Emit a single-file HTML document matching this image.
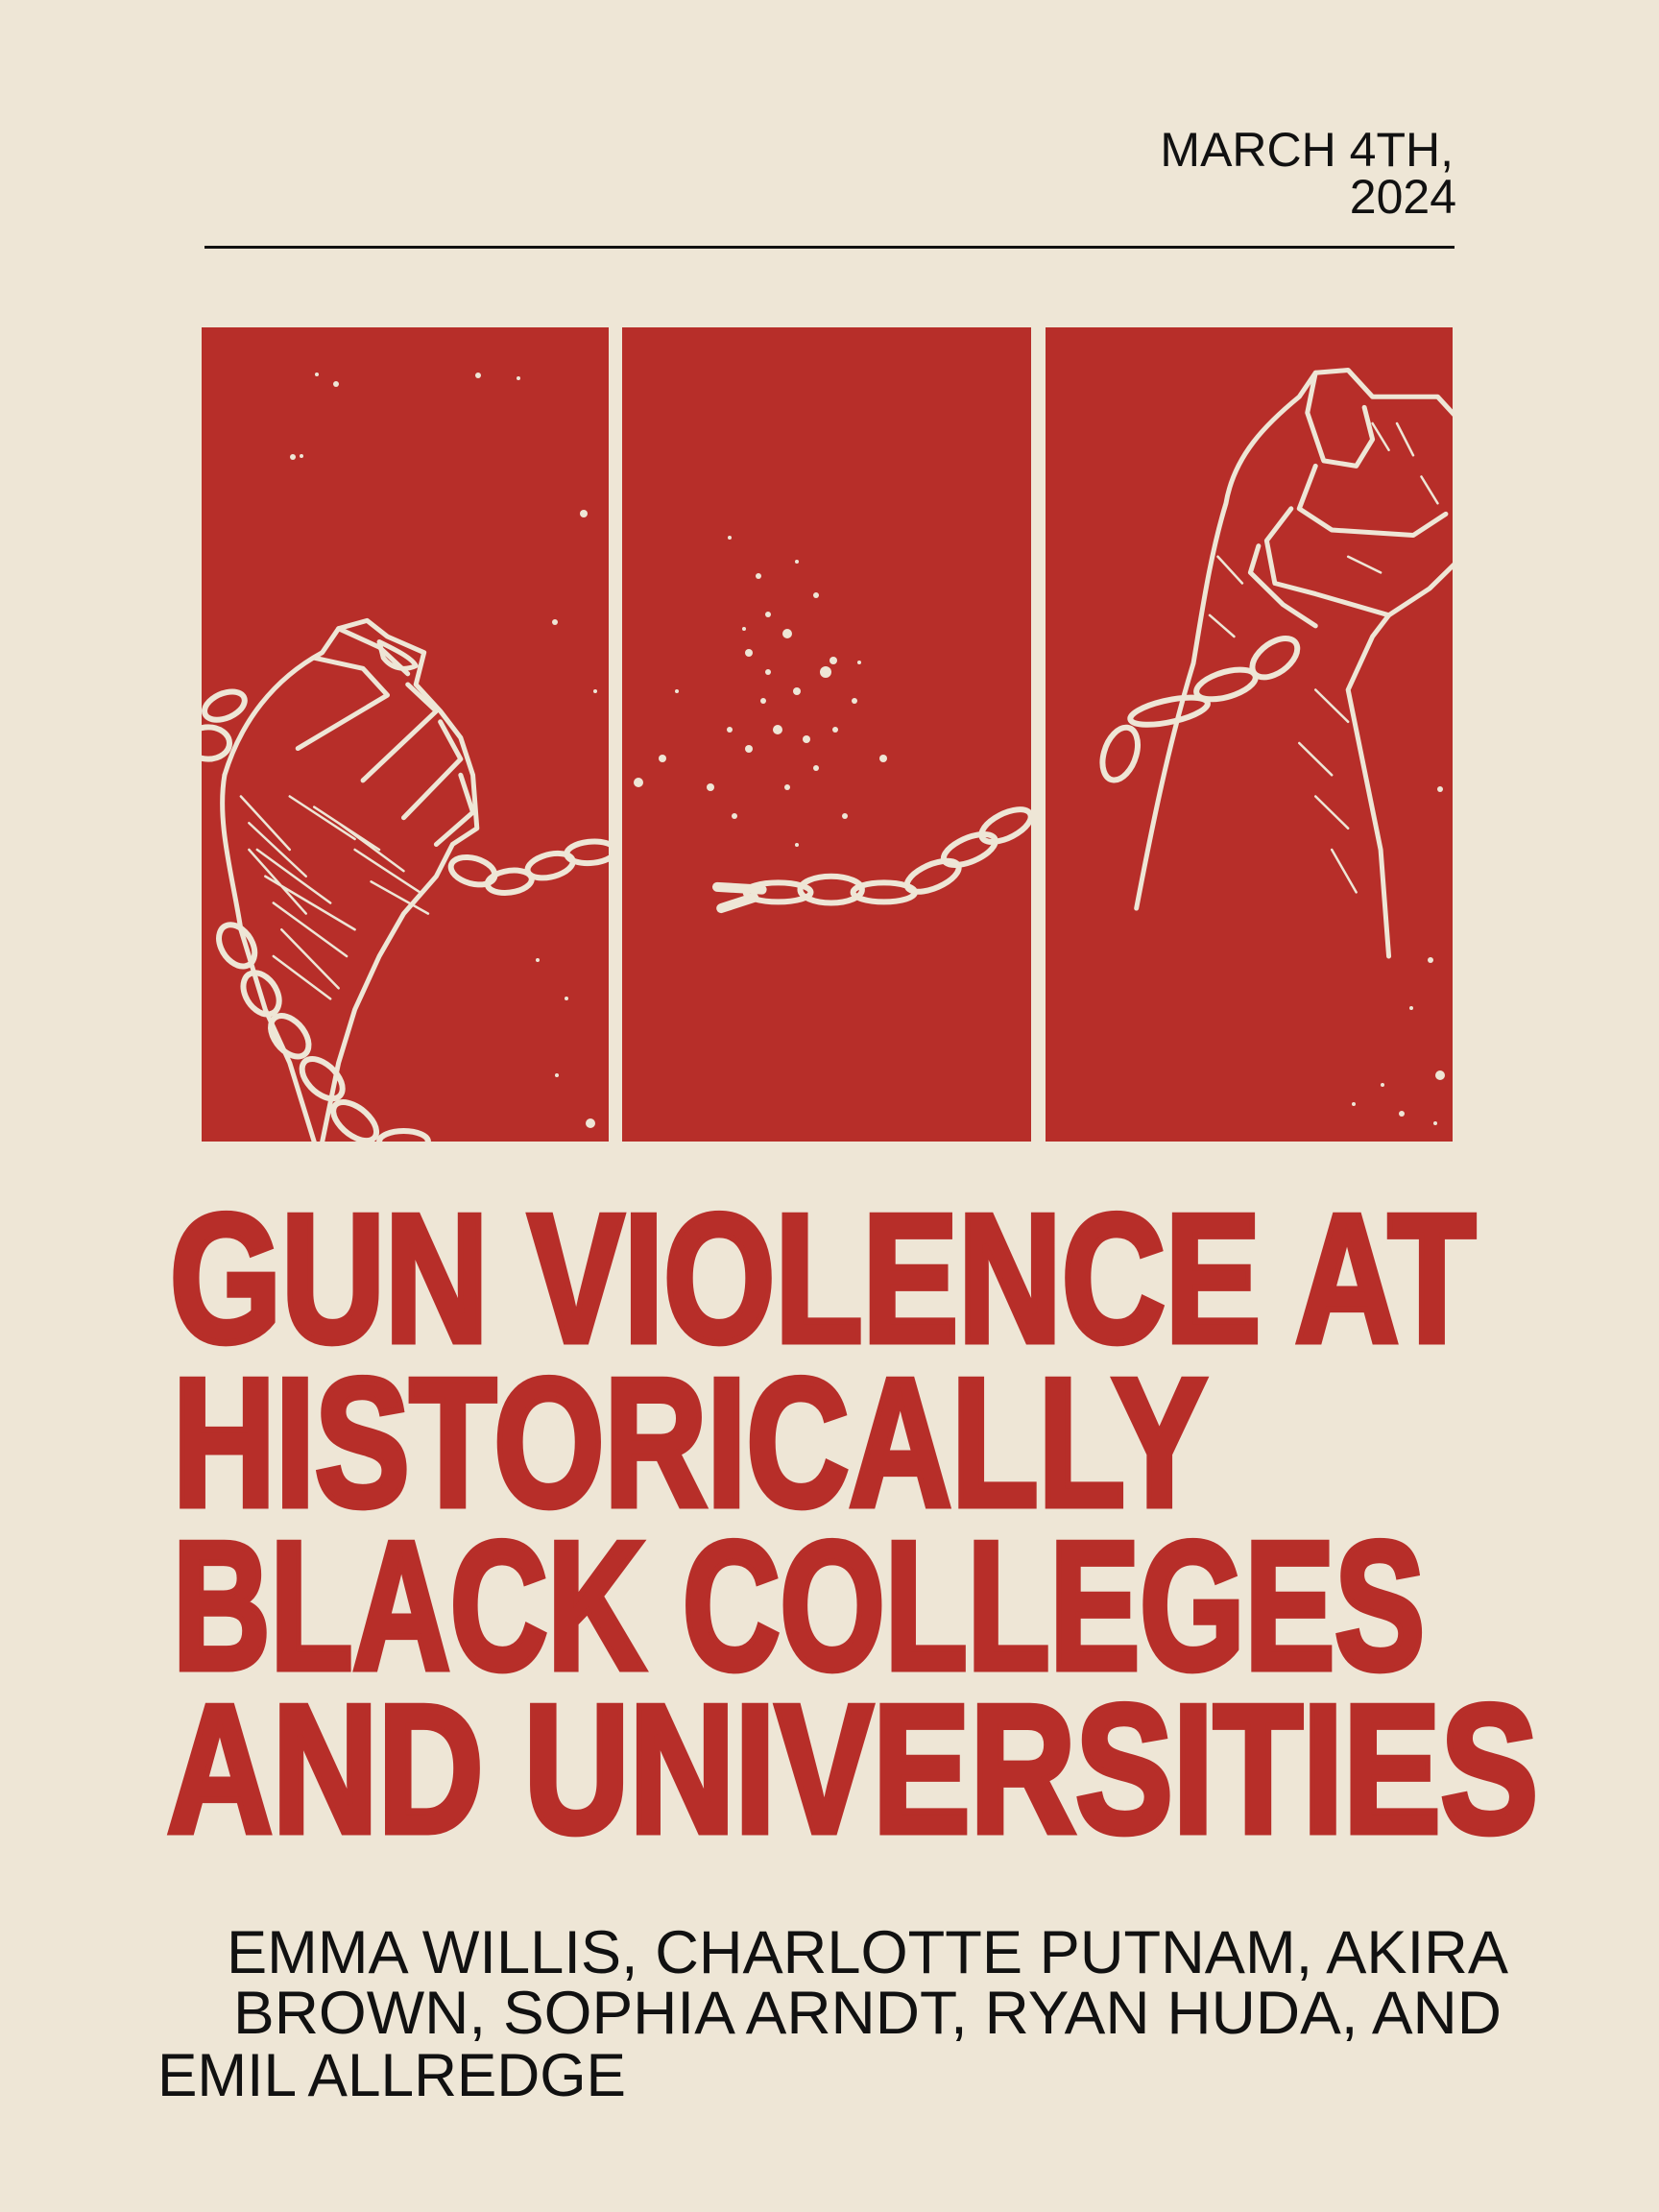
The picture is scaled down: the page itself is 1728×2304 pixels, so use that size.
<!DOCTYPE html>
<html><head><meta charset="utf-8"><style>
html,body{margin:0;padding:0;background:#eee6d6;}
svg{display:block}
</style></head><body>
<svg width="1728" height="2304" viewBox="0 0 1728 2304" xmlns="http://www.w3.org/2000/svg">
<rect width="1728" height="2304" fill="#eee6d6"/>
<g font-family="Liberation Sans, sans-serif" fill="#111">
<text x="1514" y="173" font-size="50" text-anchor="end">MARCH 4TH,</text>
<text x="1517" y="222" font-size="50" text-anchor="end">2024</text>
</g>
<rect x="213" y="256" width="1302" height="3" fill="#111"/>
<rect x="210" y="341" width="424" height="848" fill="#b72e29"/>
<rect x="648" y="341" width="426" height="848" fill="#b72e29"/>
<rect x="1089" y="341" width="424" height="848" fill="#b72e29"/>
<defs><clipPath id="c"><rect x="210" y="341" width="424" height="848"/><rect x="648" y="341" width="426" height="848"/><rect x="1089" y="341" width="424" height="848"/></clipPath></defs>
<g clip-path="url(#c)">
<g transform="translate(200,330) scale(0.848,0.555)" fill="none" stroke="#eee6d6" stroke-width="5" vector-effect="non-scaling-stroke" stroke-linecap="round" stroke-linejoin="round">
<path vector-effect="non-scaling-stroke" d="M40,860 C60,760 100,680 160,630 L180,585 L215,570 L240,600 L285,630 L275,690 L305,740 L330,790 L345,860 L350,960 L320,990 L300,1050 L260,1120 L230,1200 L200,1300 L180,1400 L160,1548"/>
<path vector-effect="non-scaling-stroke" d="M40,860 C30,950 50,1050 60,1150 L90,1300 L120,1400 L150,1548"/>
<path vector-effect="non-scaling-stroke" d="M180,585 L230,620 L265,670 M150,640 L210,660 L240,710 L130,810 M265,690 L300,740 L210,870 M305,760 L330,830 L260,940 M330,860 L345,930 L300,990"/>
<path vector-effect="non-scaling-stroke" d="M230,610 C250,625 270,640 275,655 C260,665 245,660 235,640 Z"/>
<path vector-effect="non-scaling-stroke" stroke-width="2.5" d="M60,900 L120,1000 M70,950 L140,1050 M80,1000 L170,1100 M90,1050 L200,1150 M100,1100 L190,1200 M110,1150 L180,1260 M150,920 L230,1000 M180,950 L260,1040 M120,900 L200,980 M70,1000 L140,1120 M100,1200 L170,1280 M200,1000 L280,1080 M220,1060 L290,1120"/>
<g stroke-width="6">
<ellipse vector-effect="non-scaling-stroke" cx="345" cy="1040" rx="30" ry="22" transform="rotate(40 345 1040)"/>
<ellipse vector-effect="non-scaling-stroke" cx="390" cy="1060" rx="28" ry="20" transform="rotate(-20 390 1060)"/>
<ellipse vector-effect="non-scaling-stroke" cx="440" cy="1030" rx="30" ry="20" transform="rotate(-30 440 1030)"/>
<ellipse vector-effect="non-scaling-stroke" cx="490" cy="1005" rx="30" ry="20" transform="rotate(-10 490 1005)"/>
<ellipse vector-effect="non-scaling-stroke" cx="40" cy="730" rx="30" ry="20" transform="rotate(-50 40 730)"/>
<ellipse vector-effect="non-scaling-stroke" cx="20" cy="800" rx="26" ry="30"/>
<ellipse vector-effect="non-scaling-stroke" cx="55" cy="1180" rx="20" ry="40" transform="rotate(-15 55 1180)"/>
<ellipse vector-effect="non-scaling-stroke" cx="85" cy="1270" rx="20" ry="40" transform="rotate(-15 85 1270)"/>
<ellipse vector-effect="non-scaling-stroke" cx="120" cy="1350" rx="20" ry="40" transform="rotate(-20 120 1350)"/>
<ellipse vector-effect="non-scaling-stroke" cx="160" cy="1430" rx="20" ry="40" transform="rotate(-25 160 1430)"/>
<ellipse vector-effect="non-scaling-stroke" cx="200" cy="1510" rx="20" ry="40" transform="rotate(-30 200 1510)"/>
<ellipse vector-effect="non-scaling-stroke" cx="260" cy="1548" rx="30" ry="20"/>
<path vector-effect="non-scaling-stroke" stroke-width="10" d="M645,1070 L700,1075 M650,1110 L690,1090"/>
<ellipse vector-effect="non-scaling-stroke" cx="720" cy="1080" rx="40" ry="18"/>
<ellipse vector-effect="non-scaling-stroke" cx="785" cy="1075" rx="38" ry="25"/>
<ellipse vector-effect="non-scaling-stroke" cx="850" cy="1080" rx="38" ry="18"/>
<ellipse vector-effect="non-scaling-stroke" cx="910" cy="1050" rx="38" ry="20" transform="rotate(-40 910 1050)"/>
<ellipse vector-effect="non-scaling-stroke" cx="955" cy="1000" rx="38" ry="20" transform="rotate(-40 955 1000)"/>
<ellipse vector-effect="non-scaling-stroke" cx="1000" cy="955" rx="38" ry="20" transform="rotate(-45 1000 955)"/>
<ellipse vector-effect="non-scaling-stroke" cx="1140" cy="820" rx="20" ry="50" transform="rotate(10 1140 820)"/>
<ellipse vector-effect="non-scaling-stroke" cx="1200" cy="740" rx="50" ry="20" transform="rotate(-20 1200 740)"/>
<ellipse vector-effect="non-scaling-stroke" cx="1270" cy="690" rx="40" ry="22" transform="rotate(-30 1270 690)"/>
<ellipse vector-effect="non-scaling-stroke" cx="1330" cy="640" rx="40" ry="22" transform="rotate(-60 1330 640)"/>
</g>
<path vector-effect="non-scaling-stroke" d="M1160,1110 C1180,950 1200,800 1230,650 C1240,560 1250,450 1270,350 C1280,260 1320,200 1360,150 L1380,105 L1420,100 L1450,150 L1530,150 L1560,200 L1560,450 L1520,510 L1470,560 L1450,600 L1420,700 L1440,850 L1460,1000 L1470,1200"/>
<path vector-effect="non-scaling-stroke" d="M1380,105 L1370,180 L1390,270 L1430,280 L1450,230 L1440,170 M1380,280 L1360,360 L1400,400 L1500,410 L1540,370 M1350,360 L1320,420 L1330,500 L1380,520 L1470,560 M1310,430 L1300,480 L1340,540 L1380,580"/>
<path vector-effect="non-scaling-stroke" stroke-width="2.5" d="M1450,200 L1470,250 M1480,200 L1500,260 M1510,300 L1530,350 M1420,450 L1460,480 M1380,700 L1420,760 M1360,800 L1400,860 M1380,900 L1420,960 M1400,1000 L1430,1080 M1260,450 L1290,500 M1250,560 L1280,600"/>
</g>
<g fill="#eee6d6">
<circle cx="330" cy="390" r="2"/><circle cx="350" cy="400" r="3"/><circle cx="498" cy="391" r="3"/><circle cx="540" cy="394" r="2"/><circle cx="305" cy="476" r="3"/><circle cx="314" cy="475" r="2"/><circle cx="608" cy="535" r="4"/><circle cx="578" cy="648" r="3"/><circle cx="620" cy="720" r="2"/><circle cx="560" cy="1000" r="2"/><circle cx="590" cy="1040" r="2"/><circle cx="615" cy="1170" r="5"/><circle cx="580" cy="1120" r="2"/>
<circle cx="760" cy="560" r="2"/><circle cx="790" cy="600" r="3"/><circle cx="800" cy="640" r="3"/><circle cx="780" cy="680" r="4"/><circle cx="820" cy="660" r="5"/><circle cx="850" cy="620" r="3"/><circle cx="860" cy="700" r="6"/><circle cx="830" cy="720" r="4"/><circle cx="795" cy="730" r="3"/><circle cx="810" cy="760" r="5"/><circle cx="840" cy="770" r="4"/><circle cx="780" cy="780" r="4"/><circle cx="760" cy="760" r="3"/><circle cx="870" cy="760" r="3"/><circle cx="890" cy="730" r="3"/><circle cx="850" cy="800" r="3"/><circle cx="820" cy="820" r="3"/><circle cx="740" cy="820" r="4"/><circle cx="765" cy="850" r="3"/><circle cx="690" cy="790" r="4"/><circle cx="665" cy="815" r="5"/><circle cx="868" cy="688" r="4"/><circle cx="895" cy="690" r="2"/><circle cx="800" cy="700" r="3"/><circle cx="775" cy="655" r="2"/><circle cx="830" cy="585" r="2"/><circle cx="705" cy="720" r="2"/><circle cx="920" cy="790" r="4"/><circle cx="880" cy="850" r="3"/><circle cx="830" cy="880" r="2"/>
<circle cx="1500" cy="822" r="3"/><circle cx="1490" cy="1000" r="3"/><circle cx="1470" cy="1050" r="2"/><circle cx="1500" cy="1120" r="5"/><circle cx="1440" cy="1130" r="2"/><circle cx="1460" cy="1160" r="3"/><circle cx="1410" cy="1150" r="2"/><circle cx="1495" cy="1170" r="2"/>
</g>
</g>
<g font-family="Liberation Sans, sans-serif" font-weight="bold" fill="#b72e29" stroke="#b72e29" stroke-width="7" stroke-linejoin="miter" font-size="190">
<text x="177" y="1397" textLength="1360" lengthAdjust="spacingAndGlyphs">GUN VIOLENCE AT</text>
<text x="180" y="1568" textLength="1077" lengthAdjust="spacingAndGlyphs">HISTORICALLY</text>
<text x="180" y="1738" textLength="1304" lengthAdjust="spacingAndGlyphs">BLACK COLLEGES</text>
<text x="174" y="1908" textLength="1428" lengthAdjust="spacingAndGlyphs">AND UNIVERSITIES</text>
</g>
<g font-family="Liberation Sans, sans-serif" fill="#111" font-size="63">
<text x="236" y="2055" textLength="1335" lengthAdjust="spacingAndGlyphs">EMMA WILLIS, CHARLOTTE PUTNAM, AKIRA</text>
<text x="243" y="2118" textLength="1321" lengthAdjust="spacingAndGlyphs">BROWN, SOPHIA ARNDT, RYAN HUDA, AND</text>
<text x="164" y="2183" textLength="488" lengthAdjust="spacingAndGlyphs">EMIL ALLREDGE</text>
</g>
</svg>
</body></html>
